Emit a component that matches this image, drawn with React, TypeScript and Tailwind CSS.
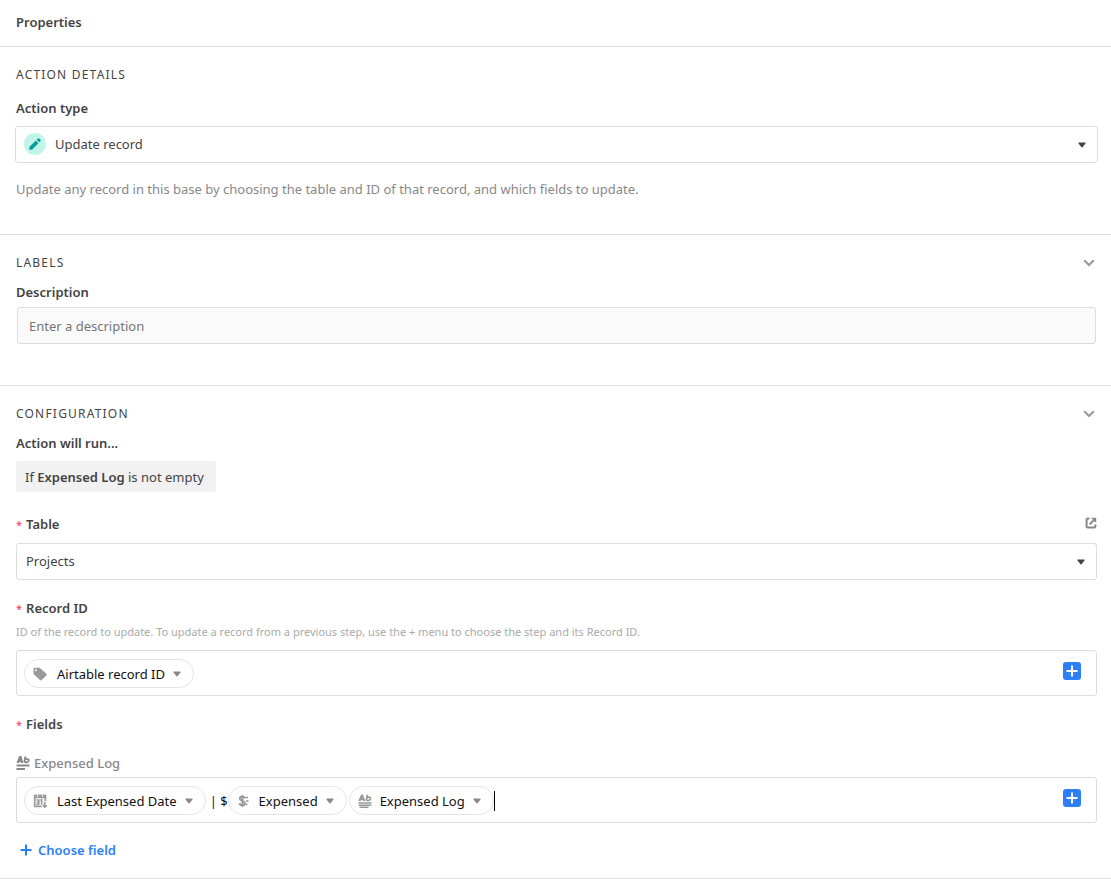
import { ReactNode } from 'react';

type IconProps = { className?: string };

function PencilIcon({ className }: IconProps) {
  return (
    <svg className={className} viewBox="0 0 12 12" fill="currentColor" aria-hidden="true">
      <path d="M0.300 9 6.800 2.500 9.500 5.200 3 11.700H0.800a.5.5 0 0 1-.5-.5z" />
      <path d="M7.700 1.700 8.700 0.700a1.200 1.200 0 0 1 1.700 0l0.900 0.900a1.200 1.200 0 0 1 0 1.700L10.300 4.300z" />
    </svg>
  );
}

function CaretIcon({ className }: IconProps) {
  return (
    <svg className={className} viewBox="0 0 8 6" fill="currentColor" aria-hidden="true">
      <path d="M1 0.5h6a.6.6 0 0 1 .5 1L4.5 5.2a.6.6 0 0 1-1 0L.5 1.5a.6.6 0 0 1 .5-1z" />
    </svg>
  );
}

function ChevronIcon({ className }: IconProps) {
  return (
    <svg className={className} viewBox="0 0 12 8" fill="none" stroke="currentColor" strokeWidth="2" aria-hidden="true">
      <path d="M1.2 1.2 6 6 10.8 1.2" />
    </svg>
  );
}

function ExpandIcon({ className }: IconProps) {
  return (
    <svg className={className} viewBox="0 0 12 12" fill="none" stroke="currentColor" strokeWidth="2" aria-hidden="true">
      <path d="M4.500 1.600H2.600a1 1 0 0 0-1 1v6.800a1 1 0 0 0 1 1h6.800a1 1 0 0 0 1-1V7.500" />
      <path d="M4.600 7.400 8.800 3.200" />
      <path d="M6 0.800h5.200v5.200z" fill="currentColor" stroke="none" />
    </svg>
  );
}

function TagIcon({ className }: IconProps) {
  return (
    <svg className={className} viewBox="0 0 14 14" fill="currentColor" aria-hidden="true">
      <path
        fillRule="evenodd"
        d="M1.200.800h5c.4 0 .8.2 1 .4l6.200 5.600c.5.5.5 1.100 0 1.600l-4.800 4.600c-.5.5-1.100.5-1.600 0L1 7.500c-.3-.3-.5-.6-.5-1V1.500c0-.4.3-.7.7-.7zM2.900 2.200a1 1 0 1 0 0 2 1 1 0 0 0 0-2z"
      />
    </svg>
  );
}

function RichTextIcon({ className }: IconProps) {
  return (
    <svg className={className} viewBox="0 0 14 14" fill="none" stroke="currentColor" aria-hidden="true">
      <path strokeWidth="2" d="M1.500 7 4 1h.6L6.400 7M2.300 5.200h3.700" />
      <path strokeWidth="1.800" d="M9.400 0.300 8.300 6.500M8.800 4.200c.5-1.600 4-1.900 4 .1 0 2.200-3.700 2.700-4.200 1.300" />
      <path strokeWidth="2" d="M0.500 9.500h13M0.500 13h8.500" />
    </svg>
  );
}

function LongTextIcon({ className }: IconProps) {
  return (
    <svg className={className} viewBox="0 0 14 14" fill="none" stroke="currentColor" aria-hidden="true">
      <path strokeWidth="1.900" d="M1.300 7 3.800 1.500h.5L6.300 7M2 5.300h3.600" />
      <path strokeWidth="1.700" d="M9.300 0.800 8.300 6.500M8.700 4.400c.4-1.500 3.800-1.800 3.800.1 0 2.100-3.500 2.500-4 1.200" />
      <path strokeWidth="1.400" d="M0.500 9h13M0.500 11.200h13M1.500 13.300h9" />
    </svg>
  );
}

function DateIcon({ className }: IconProps) {
  return (
    <svg className={className} viewBox="0 0 14 14" fill="none" stroke="currentColor" aria-hidden="true">
      <path strokeWidth="1.700" d="M12.300 7V1.700H1.700v10.600h7" />
      <path strokeWidth="3.400" d="M1 2.500h12.200" />
      <path stroke="white" strokeWidth="1" d="M4.500 1.200v1.600M9.500 1.200v1.600" />
      <path strokeWidth="1.600" d="M3.500 6h2.300v4.300H3.300M3.800 8.100h2M7.400 6.400 8.600 5.700v5" />
      <path strokeWidth="1.600" d="M11.700 7.800v5M9.800 11.200l1.900 1.900 1.900-1.900" />
    </svg>
  );
}

function CurrencyIcon({ className }: IconProps) {
  return (
    <svg className={className} viewBox="0 0 14 14" fill="none" stroke="currentColor" aria-hidden="true">
      <path strokeWidth="1.900" d="M8 4.400C7.300 2.200 2.800 2.200 2.800 4.700 2.800 7.200 8 6.400 8 9.200c0 2.600-5 2.600-5.600.1M5.400 1v12" />
      <path strokeWidth="1.700" d="M8.500 3.500h2.500M9 7h2.500M9 10.500h1.500" />
    </svg>
  );
}

function PlusIcon({ className }: IconProps) {
  return (
    <svg className={className} viewBox="0 0 12 12" fill="none" stroke="currentColor" strokeWidth="2" aria-hidden="true">
      <path d="M6 0.500v11M0.500 6h11" />
    </svg>
  );
}

function SectionHeading({ title, collapsible }: { title: string; collapsible?: boolean }) {
  return (
    <div className="flex h-5 items-center justify-between">
      <h2 className="text-xs tracking-widest uppercase">{title}</h2>
      {collapsible && (
        <button type="button" aria-label={`Collapse ${title}`} className="mr-0.5 text-[#999]">
          <ChevronIcon className="h-2 w-3" />
        </button>
      )}
    </div>
  );
}

function RequiredMark() {
  return <span className="mr-1 text-[11px] leading-none font-normal text-[#f82b60]">*</span>;
}

function Token({ icon, label }: { icon: ReactNode; label: string }) {
  return (
    <button
      type="button"
      className="flex h-[29px] shrink-0 items-center rounded-full border border-[#e5e5e5] pr-3 pl-2 text-[#111]"
    >
      <span className="text-[#999]">{icon}</span>
      <span className="mx-2">{label}</span>
      <CaretIcon className="h-1.5 w-2 text-[#888]" />
    </button>
  );
}

function TokenField({ label, children }: { label: string; children: ReactNode }) {
  return (
    <div className="flex h-[46px] items-center rounded-[3px] border border-[#ddd] pt-px pr-[15px] pl-[7px]">
      {children}
      <input aria-label={label} className="min-w-0 flex-1 outline-none" />
      <button
        type="button"
        aria-label={`Insert value in ${label}`}
        className="mb-1.5 flex size-[18px] items-center justify-center rounded-[3px] bg-[#2d7ff9] text-white"
      >
        <PlusIcon className="size-3" />
      </button>
    </div>
  );
}

export default function App() {
  return (
    <main className="bg-white font-['Noto_Sans','Open_Sans',sans-serif] text-[13px] leading-5 text-[#444]">
      <header className="border-b border-[#ddd] px-4 py-3">
        <h1 className="h-[22px] font-semibold">Properties</h1>
      </header>

      <section className="border-b border-[#e0e0e0] pt-[18px] pr-3.5 pb-[35px] pl-4">
        <SectionHeading title="Action details" />
        <label htmlFor="action-type" className="mt-[13px] block font-semibold">
          Action type
        </label>
        <div className="relative -mx-px mt-2">
          <select
            id="action-type"
            className="block h-[37px] w-full appearance-none rounded-[3px] border border-[#ddd] bg-white pr-8 pb-0.5 pl-[39px]"
          >
            <option>Update record</option>
          </select>
          <span className="pointer-events-none absolute top-[7px] left-[9px] flex size-[22px] items-center justify-center rounded-full bg-[#c2f5e9] text-[#06a09b]">
            <PencilIcon className="size-3" />
          </span>
          <CaretIcon className="pointer-events-none absolute top-4 right-3 h-1.5 w-2" />
        </div>
        <p className="mt-4 text-[#888]">
          Update any record in this base by choosing the table and ID of that record, and which fields to update.
        </p>
      </section>

      <section className="border-b border-[#e0e0e0] pt-[18px] pr-3.5 pb-[41px] pl-4">
        <SectionHeading title="Labels" collapsible />
        <label htmlFor="description" className="mt-[9px] block font-semibold">
          Description
        </label>
        <div className="mx-px mt-[5px]">
          <input
            id="description"
            placeholder="Enter a description"
            className="block h-[37px] w-full rounded-[3px] border border-[#ddd] bg-[#fafafa] px-[11px] placeholder:text-[#757575]"
          />
        </div>
      </section>

      <section className="border-b border-[#e0e0e0] pt-[18px] pr-3.5 pb-[18px] pl-4">
        <SectionHeading title="Configuration" collapsible />
        <h3 className="mt-[9px] font-semibold">Action will run...</h3>
        <p className="mt-2 flex h-[31px] w-fit items-center rounded-[3px] bg-[#f1f1f1] pr-3 pl-[9px] whitespace-pre">
          If <strong className="font-semibold">Expensed Log</strong> is not empty
        </p>

        <div className="mt-[22px] flex items-center justify-between">
          <label htmlFor="table" className="font-semibold">
            <RequiredMark />
            Table
          </label>
          <button type="button" aria-label="Open table" className="mb-0.5 text-[#888]">
            <ExpandIcon className="size-3" />
          </button>
        </div>
        <div className="relative mt-[9px]">
          <select
            id="table"
            className="block h-[37px] w-full appearance-none rounded-[3px] border border-[#ddd] bg-white pr-8 pb-0.5 pl-[9px]"
          >
            <option>Projects</option>
          </select>
          <CaretIcon className="pointer-events-none absolute top-4 right-3 h-1.5 w-2" />
        </div>

        <h3 className="mt-[18px] font-semibold">
          <RequiredMark />
          Record ID
        </h3>
        <p className="mt-1 mb-2 text-[11px] text-[#aaa]">
          ID of the record to update. To update a record from a previous step, use the + menu to choose the step and its
          Record ID.
        </p>
        <TokenField label="Record ID">
          <Token icon={<TagIcon className="mr-0.5 size-3.5" />} label="Airtable record ID" />
        </TokenField>

        <h3 className="mt-[18px] font-semibold">
          <RequiredMark />
          Fields
        </h3>
        <h4 className="mt-[19px] mb-1 flex items-center gap-1 font-medium text-[#888]">
          <RichTextIcon className="size-3.5" />
          Expensed Log
        </h4>
        <TokenField label="Expensed Log">
          <Token icon={<DateIcon className="mr-0.5 size-3.5" />} label="Last Expensed Date" />
          <span className="ml-1 text-[#111]">| $</span>
          <Token icon={<CurrencyIcon className="size-3.5" />} label="Expensed" />
          <span className="w-0.5" />
          <Token icon={<LongTextIcon className="size-3.5" />} label="Expensed Log" />
          <span className="h-5 w-px bg-black" />
        </TokenField>

        <button type="button" className="mt-[17px] flex items-center gap-1.5 pl-1 font-semibold text-[#2d7ff9]">
          <PlusIcon className="size-3" />
          Choose field
        </button>
      </section>
    </main>
  );
}
